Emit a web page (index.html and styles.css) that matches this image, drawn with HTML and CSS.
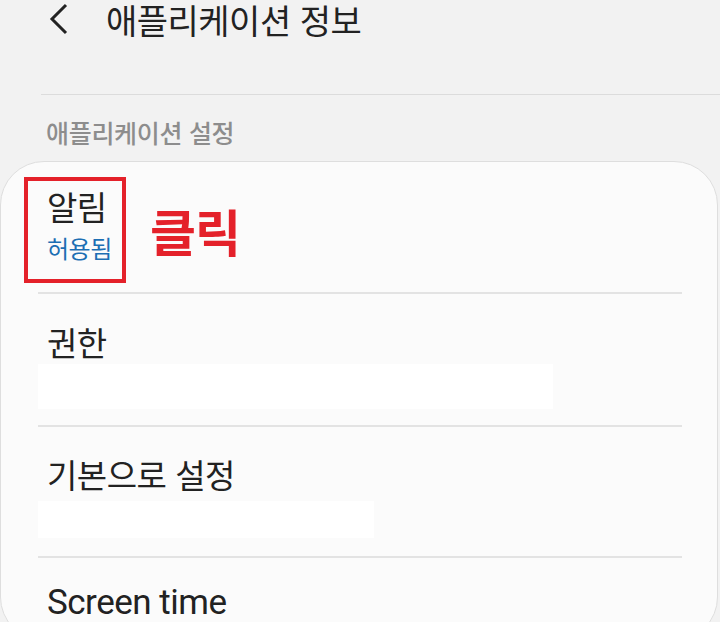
FILE: index.html
```html
<!DOCTYPE html>
<html lang="ko">
<head>
    <meta charset="UTF-8">
    <meta name="viewport" content="width=device-width, initial-scale=1.0">
    <title>애플리케이션 정보</title>
    <link rel="stylesheet" href="styles.css">
</head>
<body>

    <div class="header">
        <svg class="back" width="20" height="32" viewBox="0 0 20 32">
            <path d="M17 2 L3 16 L17 30" fill="none" stroke="#222" stroke-width="3"/>
        </svg>
        <h1>애플리케이션 정보</h1>
    </div>

    <div class="divider"></div>

    <div class="section-title">애플리케이션 설정</div>

    <div class="card">
        <!-- 알림 항목 (클릭 표시) -->
        <div class="row row-first">
            <div class="mark">
                <div class="item-title">알림</div>
                <div class="item-sub">허용됨</div>
            </div>
            <span class="click">클릭</span>
        </div>

        <div class="row">
            <div class="item-title">권한</div>
            <div class="blank" style="width: 515px; height: 45px; margin-top: 3px;"></div>
        </div>

        <div class="row row-default">
            <div class="item-title">기본으로 설정</div>
            <div class="blank" style="width: 336px; height: 37px; margin-top: 8px;"></div>
        </div>

        <div class="row row-last">
            <div class="item-title latin">Screen time</div>
        </div>
    </div>

</body>
</html>
```

FILE: styles.css
```css
* {
    margin: 0;
    padding: 0;
    box-sizing: border-box;
}
body {
    background: #f2f2f2;
    color: #222;
    font-family: "Noto Sans CJK KR", sans-serif;
    width: 720px;
    height: 622px;
    overflow: hidden;
}
.header {
    display: flex;
    align-items: center;
    height: 40px;
}
.back {
    margin-left: 49px;
    margin-top: -2px;
}
.header h1 {
    font-size: 34px;
    font-weight: normal;
    line-height: 40px;
    margin-left: 37px;
    letter-spacing: -0.5px;
    color: #222;
    white-space: nowrap;
}
.divider {
    margin: 54px 0 0 41px;
    height: 1px;
    background: #dcdcdc;
}
.section-title {
    margin: 22px 0 0 46px;
    font-size: 25px;
    line-height: 30px;
    font-weight: 500;
    color: #8d8d8d;
    letter-spacing: -0.3px;
}
.card {
    margin: 14px 2px 0 0;
    background: #fbfbfb;
    border: 1px solid #dedede;
    border-radius: 44px;
    height: 480px;
}
.row {
    margin: 0 35px 0 37px;
    border-bottom: 2px solid #e3e3e3;
    padding: 29px 0 16px 0;
}
.row-first {
    display: flex;
    align-items: center;
    padding: 15px 0 9px 0;
}
.row-default {
    padding: 28px 0 18px 0;
}
.row-last {
    border-bottom: none;
    padding-top: 26px;
}
.mark {
    width: 102px;
    height: 106px;
    margin-left: -14px;
    border: 4px solid #e4212a;
    padding: 6px 0 0 19px;
}
.item-title {
    font-size: 33px;
    line-height: 38px;
    letter-spacing: -0.5px;
    padding-left: 9px;
    color: #222;
    white-space: nowrap;
}
.mark .item-title {
    padding-left: 0;
}
.item-sub {
    font-size: 24px;
    line-height: 30px;
    color: #1d6fb4;
    letter-spacing: -0.5px;
    margin-top: 8px;
    white-space: nowrap;
}
.latin {
    font-family: Roboto, "Noto Sans CJK KR", sans-serif;
    font-size: 35px;
    letter-spacing: -0.5px;
}
.click {
    margin-left: 24px;
    font-size: 50px;
    font-weight: bold;
    color: #e4212a;
    letter-spacing: -1px;
}
.blank {
    background: #fff;
}
```
